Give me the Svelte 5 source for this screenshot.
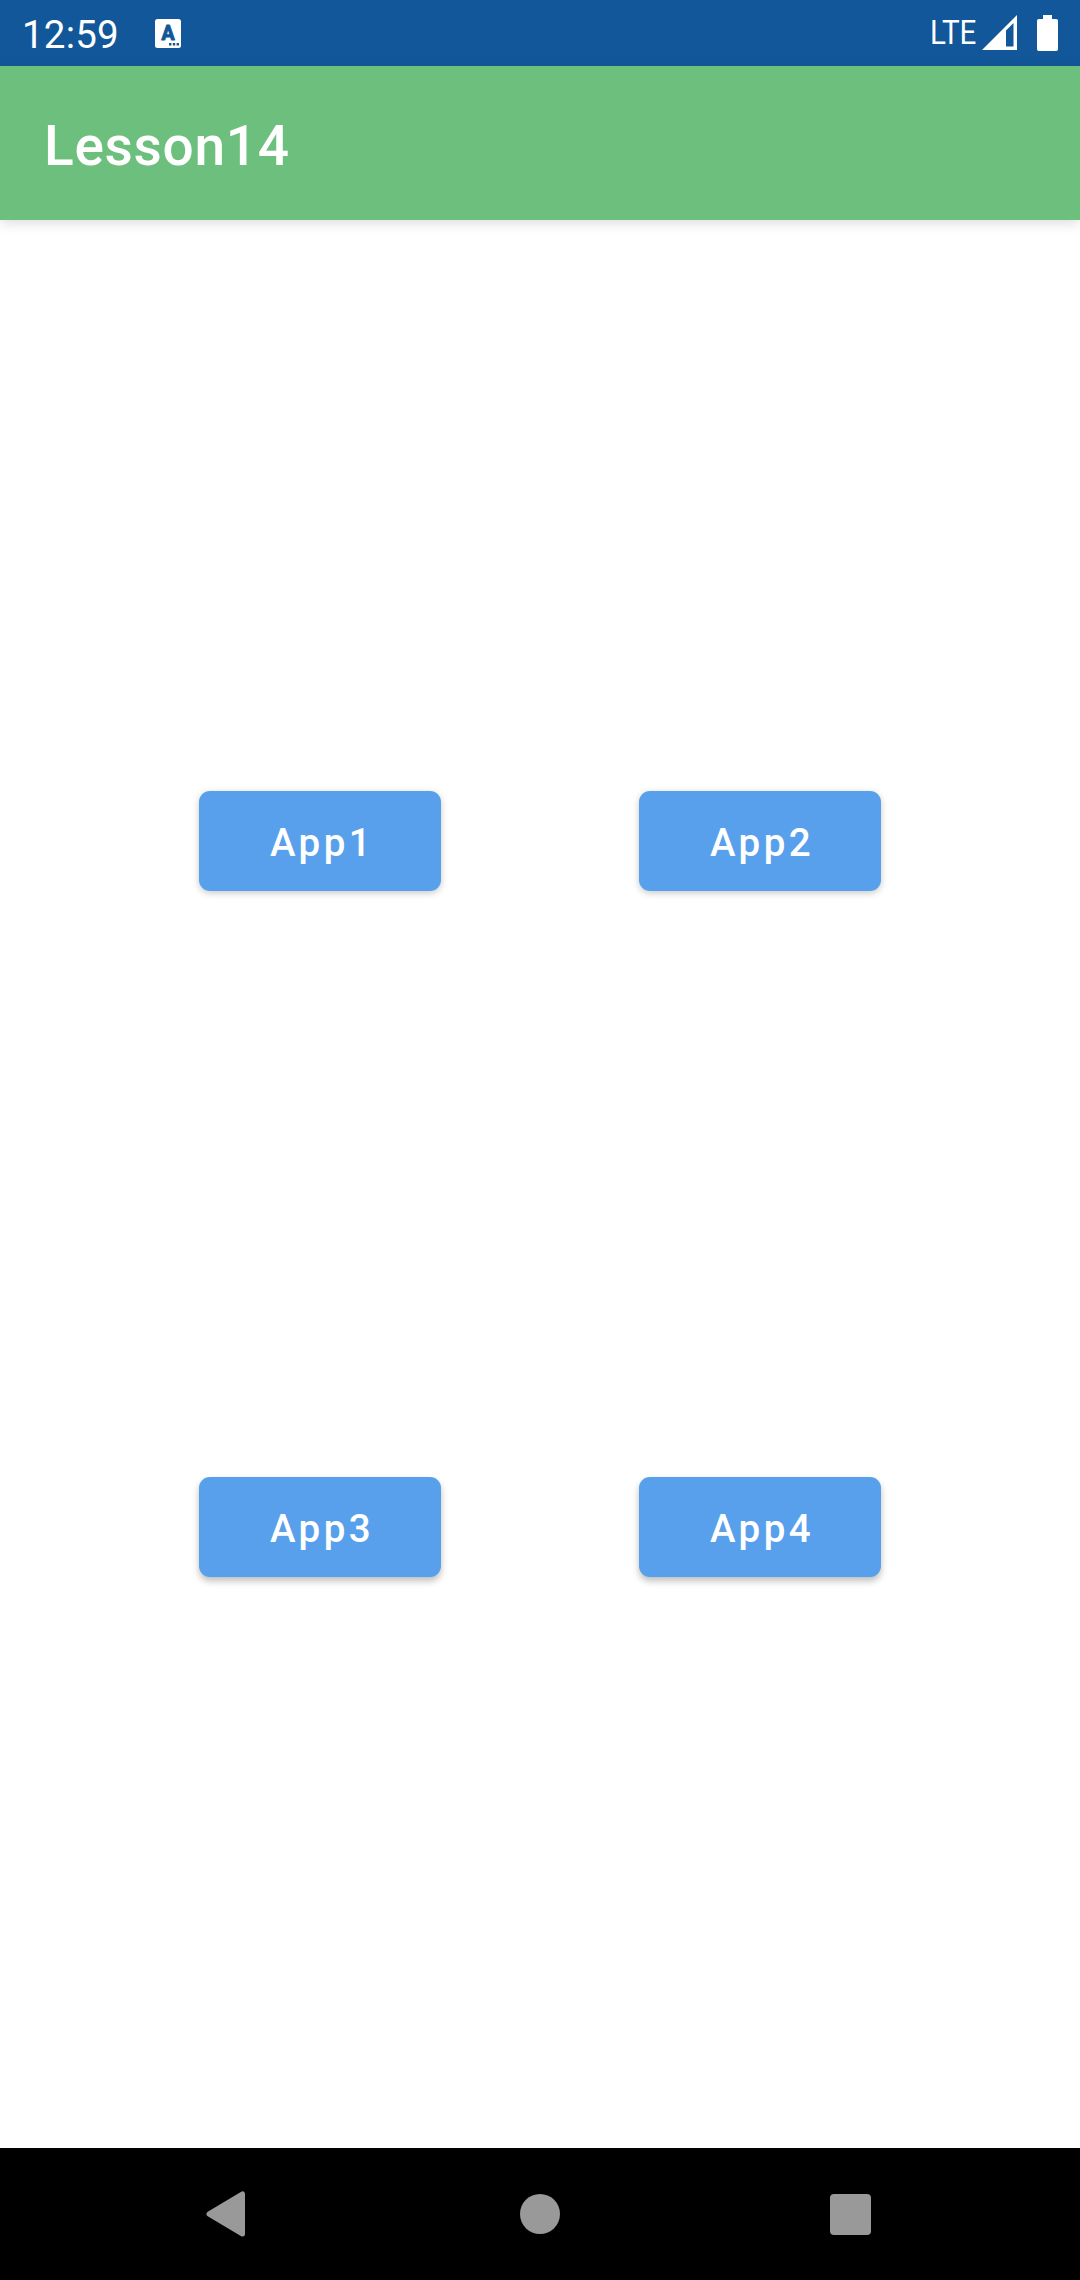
<script>
  const apps = ['App1', 'App2', 'App3', 'App4'];
</script>

<div class="screen">
  <header class="status">
    <span class="clock">12:59</span>
    <svg class="notice" width="26" height="29" viewBox="0 0 26 29">
      <rect width="26" height="29" rx="2.5" fill="#fff" />
      <text class="badge" x="13" y="21" text-anchor="middle">A</text>
      <path d="M14 24h2.4v2.4H14zM17.8 24h2.4v2.4h-2.4zM21.6 24H24v2.4h-2.4z" fill="#115799" />
    </svg>
    <span class="network">LTE</span>
    <svg class="signal" width="35" height="35" viewBox="0 0 35 35">
      <path fill="#fff" fill-rule="evenodd" d="M0 35L35 0V35ZM24 15.5V31.5H31.5V8Z" />
    </svg>
    <svg class="battery" width="21" height="36" viewBox="0 0 21 36">
      <path fill="#fff" d="M6 0h9v4h4.2Q21 4 21 5.8V34.2Q21 36 19.2 36H1.8Q0 36 0 34.2V5.8Q0 4 1.8 4H6Z" />
    </svg>
  </header>
  <div class="toolbar"><h1>Lesson14</h1></div>
  <main>
    {#each apps as app, i}
      <button class:lower={i > 1}>{app}</button>
    {/each}
  </main>
  <nav>
    <svg width="40" height="46" viewBox="0 0 40 46">
      <path d="M3 23L36.5 3V43Z" fill="#999" stroke="#999" stroke-width="5" stroke-linejoin="round" />
    </svg>
    <svg class="home" width="40" height="40" viewBox="0 0 40 40"><circle cx="20" cy="20" r="20" fill="#999" /></svg>
    <svg width="41" height="41" viewBox="0 0 41 41"><rect width="41" height="41" rx="4" fill="#999" /></svg>
  </nav>
</div>

<style>
  :global(body) {
    margin: 0;
    background: #fff;
  }
  .screen {
    width: 1080px;
    height: 2280px;
    display: flex;
    flex-direction: column;
    font-family: Roboto, 'Liberation Sans', sans-serif;
    color: #fff;
    overflow: hidden;
  }
  .screen svg {
    display: block;
    flex: none;
  }
  .status {
    height: 66px;
    flex: none;
    box-sizing: border-box;
    padding-left: 22px;
    background: #115799;
    display: flex;
    align-items: flex-start;
  }
  .clock {
    width: 133px;
    margin-top: 12px;
    font-size: 38.5px;
    line-height: 46px;
    letter-spacing: 0.2px;
  }
  .notice {
    margin-top: 19px;
  }
  .badge {
    font: 700 19.5px Roboto, sans-serif;
    fill: #115799;
    stroke: #115799;
    stroke-width: 1px;
    stroke-linejoin: round;
  }
  .network {
    width: 54px;
    margin: 12px 0 0 749px;
    font-size: 34px;
    line-height: 40px;
    transform: scaleX(0.87);
    transform-origin: left;
  }
  .signal {
    margin: 15px 0 0 -2px;
  }
  .battery {
    margin: 15px 0 0 20px;
  }
  .toolbar {
    height: 154px;
    flex: none;
    box-sizing: border-box;
    padding: 5px 44px 0;
    display: flex;
    align-items: center;
    background: #6dbf7e;
    box-shadow: 0 3px 12px rgba(0, 0, 0, 0.14);
  }
  h1 {
    margin: 0;
    font-size: 55px;
    line-height: 64px;
    font-weight: 500;
    letter-spacing: 0.7px;
  }
  main {
    flex: 1;
    display: grid;
    grid-template-columns: 242px 242px;
    grid-auto-rows: 100px;
    gap: 586px 198px;
    padding: 571px 199px 0;
  }
  button {
    padding: 3px 0 0 4px;
    border: 0;
    border-radius: 11px;
    background: #58a0eb;
    color: #fff;
    font: 500 38.5px/46px Roboto, 'Liberation Sans', sans-serif;
    letter-spacing: 3.44px;
    box-shadow: 0 2px 7px rgba(0, 0, 0, 0.22);
  }
  .lower {
    box-shadow: 0 4px 7px rgba(0, 0, 0, 0.26);
  }
  nav {
    height: 132px;
    flex: none;
    box-sizing: border-box;
    padding: 0 209px 0 206px;
    display: flex;
    align-items: center;
    justify-content: space-between;
    background: #000;
  }
  .home {
    margin-left: 4px;
  }
</style>
